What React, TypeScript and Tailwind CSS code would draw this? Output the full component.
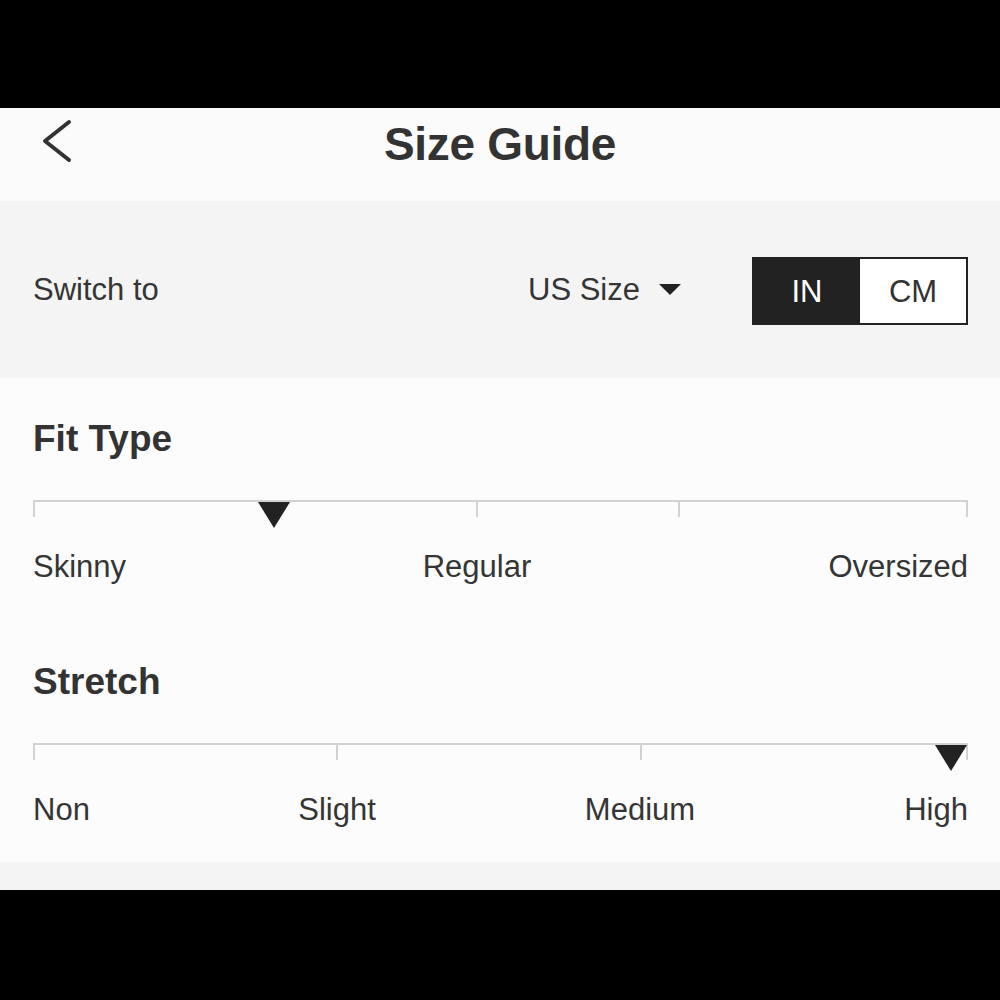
import React from "react";

type Tick = number;
type Label = { text: string; x: number; align: "left" | "center" | "right" };

function Scale({ ticks, labels, marker }: { ticks: Tick[]; labels: Label[]; marker: number }) {
  return (
    <div className="flex flex-col">
      <div className="relative h-[51px]">
        <div className="absolute left-0 right-0 top-0 h-[2px] bg-[#d2d2d2]" />
        {ticks.map((t, i) => (
          <div
            key={i}
            className="absolute top-0 h-[17px] w-[2px] bg-[#d2d2d2]"
            style={{ left: Math.min(t, 933) }}
          />
        ))}
        <svg
          className="absolute top-[2px]"
          style={{ left: marker - 16 }}
          width="32"
          height="26"
          viewBox="0 0 32 26"
        >
          <polygon points="0,0 32,0 16,26" fill="#222" />
        </svg>
      </div>
      <div className="relative h-[31px] text-[31px] leading-none text-[#353535]">
        {labels.map((l, i) => (
          <span
            key={i}
            className={
              "absolute top-0 whitespace-nowrap " +
              (l.align === "center" ? "-translate-x-1/2" : l.align === "right" ? "-translate-x-full" : "")
            }
            style={{ left: l.x }}
          >
            {l.text}
          </span>
        ))}
      </div>
    </div>
  );
}

export default function App() {
  return (
    <div
      className="w-[1000px] h-[1000px] bg-black flex flex-col"
      style={{ fontFamily: '"Liberation Sans", Arial, sans-serif' }}
    >
      <div className="h-[108px] shrink-0 bg-black" />
      {/* Header */}
      <div className="h-[93px] shrink-0 bg-[#fbfbfb] relative flex justify-center pt-[13px]">
        <svg className="absolute left-[40px] top-[10px]" width="34" height="46" viewBox="0 0 34 46">
          <polyline points="29,4 5,23 29,42" fill="none" stroke="#333" strokeWidth="4" strokeLinecap="round" strokeLinejoin="round" />
        </svg>
        <h1 className="text-[46px] leading-none font-bold text-[#333] tracking-[-0.3px]">Size Guide</h1>
      </div>
      {/* Switch row */}
      <div className="h-[177px] shrink-0 bg-[#f4f4f4] flex items-center pl-[33px] pr-[32px] leading-none text-[#353535]">
        <span className="text-[31px]">Switch to</span>
        <div className="ml-auto flex items-center">
          <span className="text-[31px]">US Size</span>
          <svg className="ml-[19px]" width="22" height="11" viewBox="0 0 22 11">
            <polygon points="0,0 22,0 11,11" fill="#222" />
          </svg>
        </div>
        <div className="ml-[71px] flex h-[68px] w-[216px] border-2 border-[#222] mt-[3px]">
          <div className="flex-1 bg-[#222] text-white flex items-center justify-center text-[31px]">IN</div>
          <div className="flex-1 bg-white text-[#333] flex items-center justify-center text-[31px]">CM</div>
        </div>
      </div>
      {/* Content */}
      <div className="h-[484px] shrink-0 bg-[#fcfcfc] pl-[33px] pr-[32px] pt-[42px] flex flex-col">
        <h2 className="text-[37px] leading-none font-bold text-[#333]">Fit Type</h2>
        <div className="mt-[43px]">
          <Scale
            ticks={[0, 443, 645, 935]}
            marker={241}
            labels={[
              { text: "Skinny", x: 0, align: "left" },
              { text: "Regular", x: 444, align: "center" },
              { text: "Oversized", x: 935, align: "right" },
            ]}
          />
        </div>
        <h2 className="mt-[81px] text-[37px] leading-none font-bold text-[#333]">Stretch</h2>
        <div className="mt-[43px]">
          <Scale
            ticks={[0, 303, 607, 935]}
            marker={918}
            labels={[
              { text: "Non", x: 0, align: "left" },
              { text: "Slight", x: 304, align: "center" },
              { text: "Medium", x: 607, align: "center" },
              { text: "High", x: 935, align: "right" },
            ]}
          />
        </div>
      </div>
      <div className="h-[28px] shrink-0 bg-[#f4f4f4]" />
      <div className="flex-1 bg-black" />
    </div>
  );
}
